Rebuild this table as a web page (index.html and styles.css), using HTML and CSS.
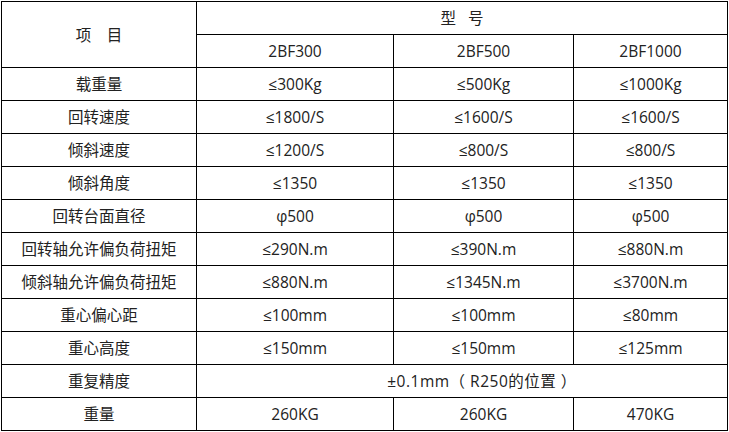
FILE: index.html
```html
<!DOCTYPE html>
<html lang="zh">
<head>
<meta charset="utf-8">
<link rel="stylesheet" href="styles.css">
</head>
<body>
<table class="spec">
  <colgroup>
    <col class="c1"><col class="c2"><col class="c3"><col class="c4">
  </colgroup>
  <tr><td rowspan="2">项　目</td><td colspan="3">型&nbsp;&nbsp;&nbsp;号</td></tr>
  <tr><td>2BF300</td><td>2BF500</td><td>2BF1000</td></tr>
  <tr><td>载重量</td><td>≤300Kg</td><td>≤500Kg</td><td>≤1000Kg</td></tr>
  <tr><td>回转速度</td><td>≤1800/S</td><td>≤1600/S</td><td>≤1600/S</td></tr>
  <tr><td>倾斜速度</td><td>≤1200/S</td><td>≤800/S</td><td>≤800/S</td></tr>
  <tr><td>倾斜角度</td><td>≤1350</td><td>≤1350</td><td>≤1350</td></tr>
  <tr><td>回转台面直径</td><td>φ500</td><td>φ500</td><td>φ500</td></tr>
  <tr><td>回转轴允许偏负荷扭矩</td><td>≤290N.m</td><td>≤390N.m</td><td>≤880N.m</td></tr>
  <tr><td>倾斜轴允许偏负荷扭矩</td><td>≤880N.m</td><td>≤1345N.m</td><td>≤3700N.m</td></tr>
  <tr><td>重心偏心距</td><td>≤100mm</td><td>≤100mm</td><td>≤80mm</td></tr>
  <tr><td>重心高度</td><td>≤150mm</td><td>≤150mm</td><td>≤125mm</td></tr>
  <tr><td>重复精度</td><td colspan="3" class="precision">±0.1mm（ R250的位置 ）</td></tr>
  <tr><td>重量</td><td>260KG</td><td>260KG</td><td>470KG</td></tr>
</table>
</body>
</html>
```

FILE: styles.css
```css
html, body {
  margin: 0;
  padding: 0;
  background: #fff;
}
body {
  padding: 1px 0 0 1px;
  font-family: "Open Sans", "Noto Sans CJK SC", sans-serif;
  font-size: 15.5px;
  color: #222;
}
.spec {
  border-collapse: collapse;
  table-layout: fixed;
  width: 726px;
}
.c1 { width: 195px; }
.c2 { width: 197px; }
.c3 { width: 180px; }
.c4 { width: 154px; }
.spec tr { height: 33px; }
.spec td {
  border: 1px solid #000;
  padding: 0;
  text-align: center;
  vertical-align: middle;
  line-height: 20px;
  white-space: nowrap;
}
.spec td.precision {
  padding-left: 40px;
  letter-spacing: 0.5px;
}
```
